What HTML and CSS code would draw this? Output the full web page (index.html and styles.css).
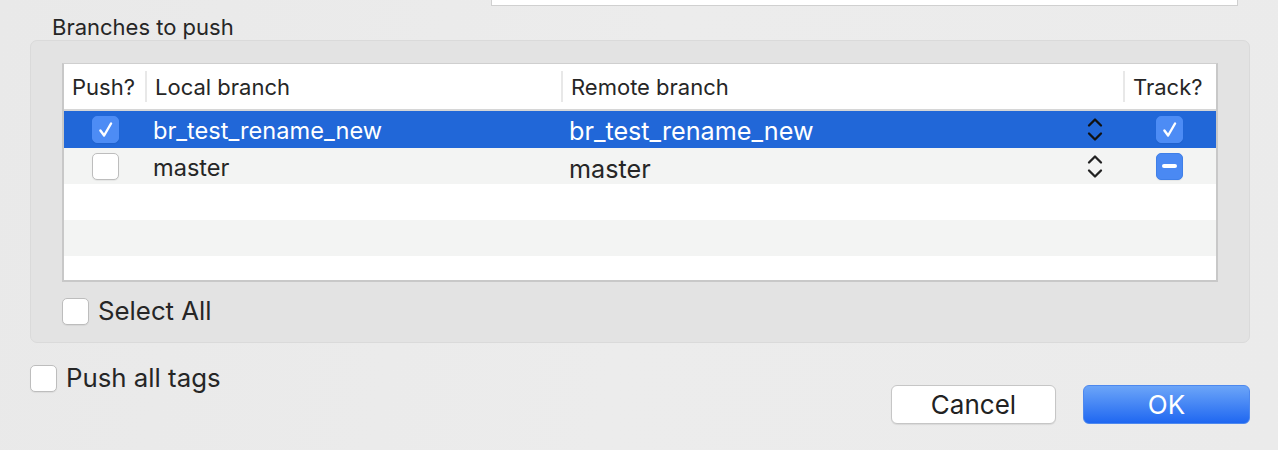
FILE: index.html
```html
<!DOCTYPE html>
<html>
<head>
<meta charset="utf-8">
<link rel="stylesheet" href="styles.css">
</head>
<body>
<div class="dialog">
  <div class="topfield"></div>
  <div class="group-label">Branches to push</div>
  <div class="group">
    <div class="table">
      <div class="thead">
        <div class="hcell c-push">Push?</div>
        <div class="hcell c-local">Local branch</div>
        <div class="hcell c-remote">Remote branch</div>
        <div class="hcell c-track">Track?</div>
      </div>
      <div class="row selected">
        <div class="cell c-push"><span class="cb checked"><svg viewBox="0 0 27 27" width="27" height="27"><path d="M8 14.5 L12 20 L19.5 7" fill="none" stroke="#fff" stroke-width="2.6" stroke-linecap="round" stroke-linejoin="round"/></svg></span></div>
        <div class="cell c-local"><span class="local-text">br_test_rename_new</span></div>
        <div class="cell c-remote"><span class="remote-text">br_test_rename_new</span>
          <svg class="updown" viewBox="0 0 18 27" width="18" height="27"><path d="M3 9.5 L9 3.5 L15 9.5 M3 17.5 L9 23.5 L15 17.5" fill="none" stroke="currentColor" stroke-width="2.3" stroke-linecap="round" stroke-linejoin="round"/></svg>
        </div>
        <div class="cell c-track"><span class="cb checked"><svg viewBox="0 0 27 27" width="27" height="27"><path d="M8 14.5 L12 20 L19.5 7" fill="none" stroke="#fff" stroke-width="2.6" stroke-linecap="round" stroke-linejoin="round"/></svg></span></div>
      </div>
      <div class="row alt">
        <div class="cell c-push"><span class="cb"></span></div>
        <div class="cell c-local"><span class="local-text">master</span></div>
        <div class="cell c-remote"><span class="remote-text low">master</span>
          <svg class="updown" viewBox="0 0 18 27" width="18" height="27"><path d="M3 9.5 L9 3.5 L15 9.5 M3 17.5 L9 23.5 L15 17.5" fill="none" stroke="currentColor" stroke-width="2.3" stroke-linecap="round" stroke-linejoin="round"/></svg>
        </div>
        <div class="cell c-track"><span class="cb mixed"><span class="dash"></span></span></div>
      </div>
      <div class="row"></div>
      <div class="row alt"></div>
      <div class="row last"></div>
    </div>
    <label class="check-line inner">
      <span class="cb"></span>
      <span class="check-text">Select All</span>
    </label>
  </div>
  <div class="footer">
    <label class="check-line">
      <span class="cb"></span>
      <span class="check-text">Push all tags</span>
    </label>
    <div class="buttons">
      <button class="btn cancel">Cancel</button>
      <button class="btn ok">OK</button>
    </div>
  </div>
</div>
</body>
</html>
```

FILE: styles.css
```css
* { box-sizing: border-box; }
html, body {
  margin: 0;
  padding: 0;
}
body {
  width: 1278px;
  height: 450px;
  overflow: hidden;
  background: linear-gradient(100deg, #e9e9e9 0%, #ececec 50%, #ebebeb 100%);
  font-family: "Inter", "Liberation Sans", sans-serif;
  color: #262626;
}
.dialog {
  display: flex;
  flex-direction: column;
}
.topfield {
  margin-left: 491px;
  width: 747px;
  height: 6px;
  background: #fff;
  border: 1px solid #d0d0d0;
  border-top: none;
}
.group-label {
  margin-left: 52px;
  height: 34px;
  font-size: 22px;
  line-height: 22px;
  padding-top: 10px;
}
.group {
  margin-left: 30px;
  width: 1220px;
  height: 303px;
  background: #e3e3e3;
  border: 1px solid #dadada;
  border-radius: 7px;
  padding: 22px 31px 0 31px;
  display: flex;
  flex-direction: column;
}
.table {
  height: 219px;
  background: #fff;
  border: 2px solid #c8c8c8;
  border-top: 1px solid #cfcfcf;
  border-right-width: 2px;
  display: flex;
  flex-direction: column;
}
.thead, .row {
  display: grid;
  grid-template-columns: 81px 416px 562px 1fr;
}
.thead {
  height: 47px;
  border-bottom: 2px solid #d6d6d6;
  padding-top: 7px;
}
.hcell {
  height: 31px;
  display: flex;
  align-items: center;
  font-size: 22px;
  padding-left: 8px;
}
.hcell + .hcell {
  border-left: 2px solid #e8e8e8;
}
.hcell.c-push { padding-left: 8px; }
.row {
  height: 36px;
}
.row.alt { background: #f3f4f3; }
.row.last { flex: 1; }
.row.selected {
  background: #2167d8;
  color: #fff;
  height: 37px;
}
.cell {
  display: flex;
  align-items: center;
}
.local-text {
  font-size: 23.6px;
  padding-top: 2px;
}
.cell.c-push { padding-left: 28px; }
.cell.c-local { padding-left: 8px; }
.cell.c-remote {
  padding-left: 8px;
  justify-content: space-between;
  padding-right: 19px;
}
.remote-text { font-size: 25.2px; padding-top: 2px; }
.remote-text.low { padding-top: 5px; }
.updown { color: #222; }
.row.selected .updown { color: #111; }
.cell.c-track { padding-left: 33px; }
.cb {
  width: 27px;
  height: 27px;
  border-radius: 5px;
  background: #fff;
  border: 1px solid #bdbdbd;
  box-shadow: 0 1px 1px rgba(0,0,0,0.06);
  display: inline-flex;
  align-items: center;
  justify-content: center;
  flex: none;
}
.cb.checked {
  background: #4d8cf5;
  border-color: #4d8cf5;
}
.cb.mixed {
  background: #4a89f3;
  border-color: #3f7fe8;
}
.dash {
  width: 15px;
  height: 4px;
  border-radius: 2px;
  background: #fff;
}
.check-line {
  display: flex;
  align-items: center;
  gap: 9px;
}
.check-line.inner {
  margin-top: 13px;
}
.check-text {
  font-size: 25.8px;
  padding-bottom: 1px;
}
.footer {
  display: flex;
  justify-content: space-between;
  align-items: flex-start;
  margin-top: 19px;
  margin-left: 30px;
  width: 1220px;
}
.buttons {
  display: flex;
  gap: 27px;
  margin-top: 23px;
}
.btn {
  height: 39px;
  border-radius: 6px;
  font-family: "Inter", "Liberation Sans", sans-serif;
  font-size: 26px;
  padding: 0;
  line-height: 1;
}
.btn.cancel {
  width: 165px;
  background: #fff;
  border: 1px solid #c6c6c6;
  color: #222;
  box-shadow: 0 1px 1px rgba(0,0,0,0.08);
}
.btn.ok {
  width: 167px;
  background: linear-gradient(#6ca5f8, #1f67f1);
  border: 1px solid #4d88ee;
  color: #fff;
}
```
